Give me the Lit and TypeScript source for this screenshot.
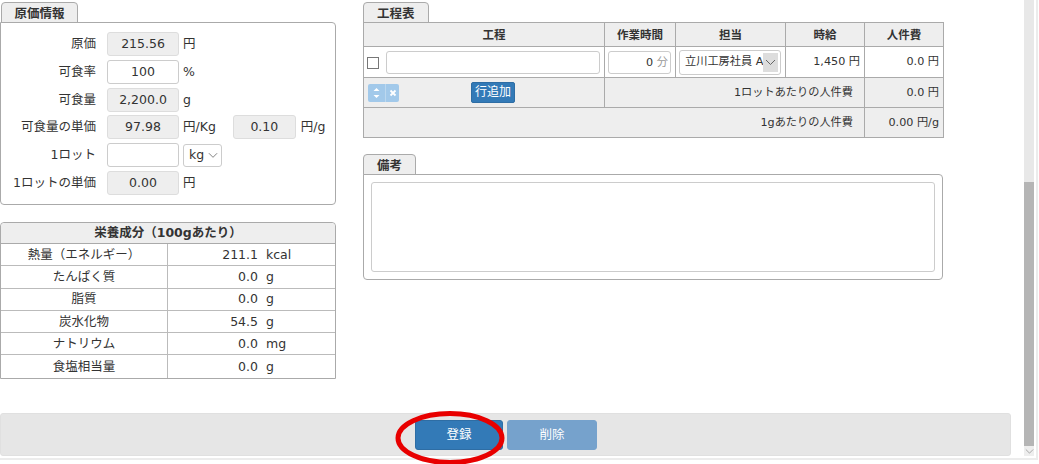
import { LitElement, html, css } from "lit";
import { customElement } from "lit/decorators.js";

const nutrition = [
  ["熱量（エネルギー）", "211.1", "kcal"],
  ["たんぱく質", "0.0", "g"],
  ["脂質", "0.0", "g"],
  ["炭水化物", "54.5", "g"],
  ["ナトリウム", "0.0", "mg"],
  ["食塩相当量", "0.0", "g"],
];

@customElement("app-root")
export class AppRoot extends LitElement {
  static styles = css`
    :host {
      display: block;
      width: 1039px;
      height: 464px;
      overflow: hidden;
      position: relative;
      background: #fff;
      color: #333;
      font: 12.5px/18px "DejaVu Sans", "Noto Sans CJK JP", sans-serif;
    }
    * { box-sizing: border-box; }
    .page { display: flex; width: 1038px; height: 460px; border-right: 2px solid #ececec; border-bottom: 2px solid #ececec; }
    .content { width: 1024px; flex: none; display: flex; flex-direction: column; }
    .main { display: flex; gap: 27px; padding-top: 2px; height: 413px; flex: none; }
    .left { width: 336px; flex: none; display: flex; flex-direction: column; }
    .right { width: 580px; flex: none; display: flex; flex-direction: column; }
    .tab {
      height: 21px;
      width: fit-content;
      margin-bottom: -1px;
      padding: 1px 13px 0;
      background: #eee;
      border: 1px solid #aaa;
      border-radius: 4px 4px 0 0;
      font-weight: 700;
      font-size: 12.5px;
      line-height: 19px;
    }
    .tab.l { margin-left: 1px; padding: 1px 12.5px 0; }
    .box {
      height: 183px;
      border: 1px solid #aaa;
      border-radius: 0 4px 4px 4px;
      padding: 9px 0 0;
      display: grid;
      grid-template-columns: 95px 72px auto;
      grid-auto-rows: 24px;
      row-gap: 3.8px;
      column-gap: 11px;
      align-items: center;
    }
    .lbl { text-align: right; white-space: nowrap; }
    .cellrow { display: flex; align-items: center; gap: 4px; white-space: nowrap; }
    .inp {
      height: 24px;
      width: 72px;
      border: 1px solid #ccc;
      border-radius: 3px;
      background: #fff;
      text-align: center;
      line-height: 22px;
    }
    .inp.ro { background: #eee; border-color: #ddd; }
    .inp.small { width: 63px; margin-left: 13px; margin-right: 1px; }
    .unitsel {
      width: 39px;
      height: 23px;
      border: 1px solid #ccc;
      border-radius: 3px;
      display: flex;
      align-items: center;
      gap: 4px;
      padding-left: 5px;
    }
    .unit { margin-left: -7px; }
    table { border-collapse: collapse; table-layout: fixed; width: 100%; }
    .nut { margin-top: 17px; width: 336px; border-collapse: separate; border-spacing: 0; border: 1px solid #aaa; border-radius: 4px 4px 0 0; }
    .nut th {
      height: 21px; padding: 0; background: #eee; font-weight: 700; text-align: center;
      border-bottom: 1px solid #aaa; border-radius: 4px 4px 0 0; line-height: 18px;
    }
    .nut td { height: 22.3px; padding: 0; border-bottom: 1px solid #bbb; text-align: center; line-height: 16px; }
    .nut tr:last-child td { border-bottom: 0; }
    .nut td:first-child { border-right: 1px solid #bbb; width: 167px; }
    .nv { display: flex; }
    .nv b { font-weight: 400; width: 90px; text-align: right; }
    .nv i { font-style: normal; margin-left: 8px; }
    .proc { width: 580px; border: 1px solid #aaa; font-size: 11.2px; }
    .proc th, .proc td { border: 1px solid #aaa; padding: 0; }
    .proc th { height: 24px; background: #eee; font-weight: 700; font-size: 11.5px; }
    .proc th.first { padding-left: 20px; }
    .proc .r1 td { height: 31px; }
    .proc .r2 td { height: 30px; background: #eee; }
    .proc .r3 td { height: 30px; background: #eee; }
    .proc td.num { text-align: right; padding-right: 4px; white-space: nowrap; }
    .proc td.lab { text-align: right; padding-right: 11px; }
    .r1cell { display: flex; align-items: center; gap: 7px; padding-left: 3px; }
    .chk { width: 12px; height: 12px; border: 1px solid #777; flex: none; margin-top: 2px; }
    .tinp { width: 214px; height: 23px; border: 1px solid #ccc; border-radius: 3px; background: #fff; }
    .mins {
      width: 63px; height: 23px; margin-left: 3px; border: 1px solid #ccc; border-radius: 3px;
      text-align: right; padding-right: 2px; line-height: 22px;
    }
    .mins span { color: #999; }
    .sel {
      width: 102px; height: 25px; margin-left: 3px; border: 1px solid #ccc; border-radius: 3px;
      display: flex; align-items: center; padding-left: 5px; white-space: nowrap;
    }
    .sel .t { width: 78px; overflow: hidden; flex: none; line-height: 22px; }
    .sel .a { width: 15px; height: 19px; background: #ddd; flex: none; display: flex; align-items: center; justify-content: center; }
    .add { display: flex; align-items: center; padding-left: 4px; height: 100%; }
    .mv { width: 31px; height: 18px; background: #a2c9ea; border-radius: 2px; display: flex; flex: none; }
    .mv span { display: flex; align-items: center; justify-content: center; }
    .mv .u { width: 18px; border-right: 1px solid #bcd8ef; }
    .mv .x { width: 13px; }
    .addb {
      margin-left: 72px; width: 44px; height: 21px; background: #337ab7; color: #fff;
      border: 1px solid #2e6da4; border-radius: 2px; text-align: center; line-height: 19px; font-size: 12px;
    }
    .note { margin-top: 16px; }
    .notebox { height: 106px; border: 1px solid #aaa; border-radius: 0 4px 4px 4px; padding: 7px; }
    .ta { height: 90px; border: 1px solid #ccc; border-radius: 3px; background: #fff; }
    .footer {
      width: 1011px; height: 43px; background: #e6e6e6; border: 1px solid #e0e0e0; border-radius: 3px;
      display: flex; justify-content: center; align-items: center; gap: 4px; padding-left: 1px;
    }
    .btn {
      width: 88px; height: 30px; color: #fff; border-radius: 3px; text-align: center;
      line-height: 28px; background: #337ab7; border: 1px solid #2e6da4;
    }
    .btn.off { background: #76a2cc; border-color: #76a2cc; width: 90px; }
    .bar { width: 10px; flex: none; background: #e8e8e8; display: flex; flex-direction: column; height: 456px; }
    .bar .sp { height: 182px; flex: none; }
    .bar .th { flex: 1; background: #b5b5b5; }
    .bar .ar { height: 10px; flex: none; display: flex; justify-content: center; align-items: center; background: #eee; }
    .mark { position: absolute; left: 394px; top: 408px; pointer-events: none; }
  `;

  render() {
    const chev = (c = "#555", w = 11) => html`<svg width=${w} height="7" viewBox="0 0 11 7"><path d="M1 1l4.5 4.5L10 1" fill="none" stroke=${c} stroke-width="1"/></svg>`;
    return html`
      <div class="page">
        <div class="content">
          <div class="main">
            <div class="left">
              <div class="tab l">原価情報</div>
              <div class="box">
                <div class="lbl">原価</div><div class="inp ro">215.56</div><div class="unit">円</div>
                <div class="lbl">可食率</div><div class="inp">100</div><div class="unit">%</div>
                <div class="lbl">可食量</div><div class="inp ro">2,200.0</div><div class="unit">g</div>
                <div class="lbl">可食量の単価</div><div class="inp ro">97.98</div>
                <div class="cellrow unit">円/Kg<div class="inp ro small">0.10</div>円/g</div>
                <div class="lbl">1ロット</div><div class="inp"></div>
                <div class="cellrow unit"><div class="unitsel">kg ${chev("#777", 10)}</div></div>
                <div class="lbl">1ロットの単価</div><div class="inp ro">0.00</div><div class="unit">円</div>
              </div>
              <table class="nut">
                <thead><tr><th colspan="2">栄養成分（100gあたり）</th></tr></thead>
                <tbody>
                  ${nutrition.map(([n, v, u]) => html`<tr><td>${n}</td><td><div class="nv"><b>${v}</b><i>${u}</i></div></td></tr>`)}
                </tbody>
              </table>
            </div>
            <div class="right">
              <div class="tab">工程表</div>
              <table class="proc">
                <colgroup><col style="width:241px"/><col style="width:71px"/><col style="width:110px"/><col style="width:79px"/><col style="width:79px"/></colgroup>
                <thead><tr><th class="first">工程</th><th>作業時間</th><th>担当</th><th>時給</th><th>人件費</th></tr></thead>
                <tbody>
                  <tr class="r1">
                    <td><div class="r1cell"><span class="chk"></span><span class="tinp"></span></div></td>
                    <td><div class="mins">0 <span>分</span></div></td>
                    <td><div class="sel"><span class="t">立川工房社員 A</span><span class="a">${chev("#666")}</span></div></td>
                    <td class="num">1,450 円</td>
                    <td class="num">0.0 円</td>
                  </tr>
                  <tr class="r2">
                    <td><div class="add">
                      <span class="mv">
                        <span class="u"><svg width="9" height="14" viewBox="0 0 9 14"><path d="M1.5 5L4.5 2l3 3zM1.5 9l3 3 3-3z" fill="#fff"/></svg></span>
                        <span class="x"><svg width="8" height="8" viewBox="0 0 8 8"><path d="M1.5 1.5l5 5M6.5 1.5l-5 5" stroke="#fff" stroke-width="1.8"/></svg></span>
                      </span>
                      <span class="addb">行追加</span>
                    </div></td>
                    <td colspan="3" class="lab">1ロットあたりの人件費</td>
                    <td class="num">0.0 円</td>
                  </tr>
                  <tr class="r3">
                    <td colspan="4" class="lab">1gあたりの人件費</td>
                    <td class="num">0.00 円/g</td>
                  </tr>
                </tbody>
              </table>
              <div class="note">
                <div class="tab">備考</div>
                <div class="notebox"><div class="ta"></div></div>
              </div>
            </div>
          </div>
          <div class="footer">
            <div class="btn">登録</div>
            <div class="btn off">削除</div>
          </div>
        </div>
        <div class="bar">
          <div class="sp"></div>
          <div class="th"></div>
          <div class="ar">${chev("#999", 9)}</div>
        </div>
      </div>
      <svg class="mark" width="112" height="60" viewBox="0 0 112 60">
        <ellipse cx="56" cy="30" rx="52" ry="24.5" fill="none" stroke="#e80000" stroke-width="5"/>
      </svg>
    `;
  }
}
